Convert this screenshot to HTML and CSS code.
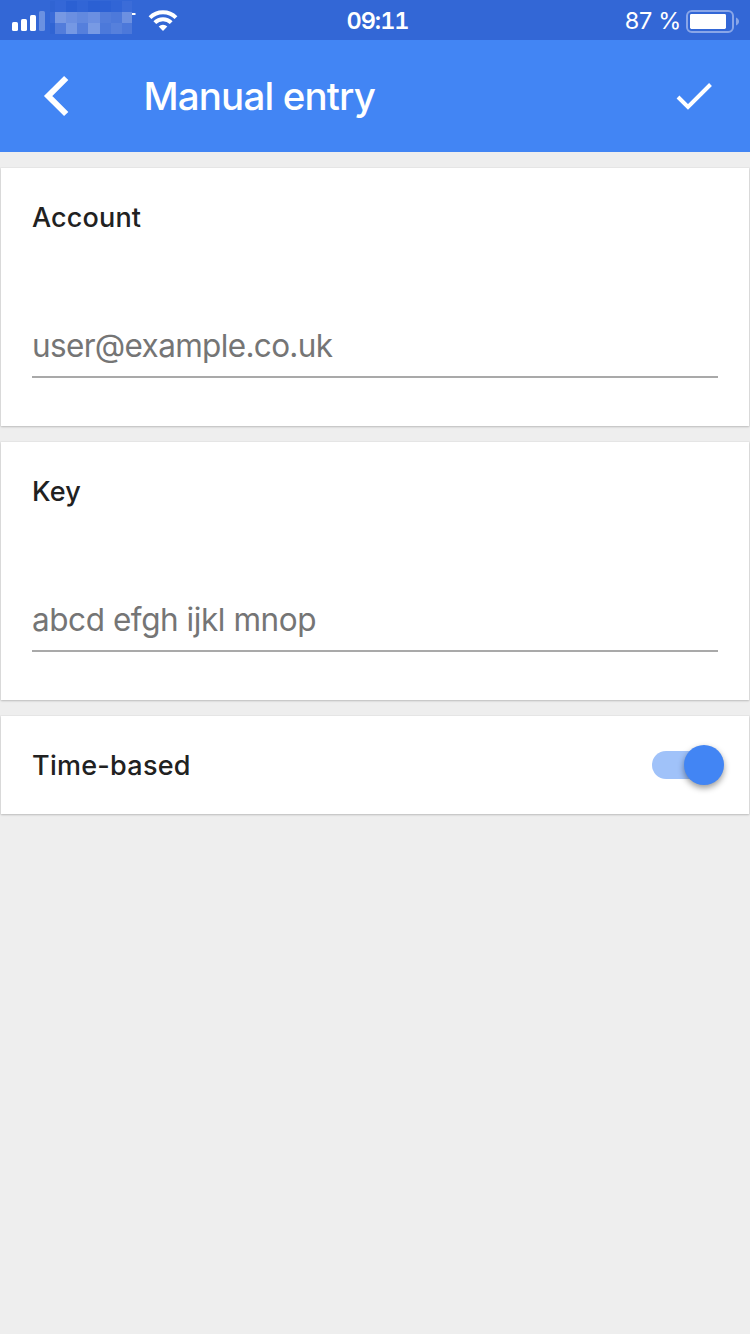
FILE: index.html
```html
<!DOCTYPE html>
<html lang="en">
<head>
<meta charset="utf-8">
<title>Manual entry</title>
<link rel="stylesheet" href="styles.css">
</head>
<body>
<div class="status">
  <svg class="status-left" width="190" height="40" viewBox="0 0 190 40">
    <g fill="#fff">
      <rect x="12" y="21" width="6" height="9" rx="1.6"/>
      <rect x="21" y="18" width="6" height="12" rx="1.6"/>
      <rect x="30" y="14" width="6" height="16" rx="1.6"/>
      <rect x="39" y="10" width="6" height="20" rx="1.6" opacity=".28"/>
    </g>
    <g shape-rendering="crispEdges">
      <path fill="#3064d3" d="M50 0h5v11h-5zM50 22h5v11h-5z"/>
      <path fill="#3a6bd8" d="M50 11h5v11h-5z"/>
      <path fill="#3467d7" d="M55 0h11v11H55z"/>
      <path fill="#2b60d3" d="M66 0h11v11H66zM88 0h12v11H88z"/>
      <path fill="#3165d6" d="M77 0h11v11H77zM111 0h11v11h-11z"/>
      <path fill="#2c61d4" d="M100 0h11v11h-11z"/>
      <path fill="#3b6cd8" d="M122 0h10v11h-10z"/>
      <path fill="#7798e3" d="M55 11h11v11H55z"/>
      <path fill="#6b8fe1" d="M66 11h11v11H66zM88 11h12v11H88z"/>
      <path fill="#6289df" d="M77 11h11v11H77z"/>
      <path fill="#527ddb" d="M100 11h11v11h-11z"/>
      <path fill="#4d79da" d="M111 11h11v11h-11z"/>
      <path fill="#6c90e1" d="M122 11h10v11h-10z"/>
      <path fill="#527cdb" d="M55 22h11v11H55z"/>
      <path fill="#7598e4" d="M66 22h11v11H66z"/>
      <path fill="#557fdc" d="M77 22h11v11H77z"/>
      <path fill="#789ae4" d="M88 22h12v11H88z"/>
      <path fill="#4c79da" d="M100 22h11v11h-11z"/>
      <path fill="#5680dc" d="M111 22h11v11h-11z"/>
      <path fill="#4c78da" d="M122 22h10v11h-10z"/>
    </g>
    <path fill="#fff" d="M132 12h3.500v2H132z"/>
    <g fill="none" stroke="#fff" stroke-width="4">
      <path d="M150 16.600a18.600 18.600 0 0 1 26 0"/>
      <path d="M154.800 21.600a11.800 11.800 0 0 1 16.400 0"/>
    </g>
    <path fill="#fff" d="M158.700 25.600a6.200 6.200 0 0 1 8.600 0L163 30z"/>
  </svg>
  <span class="time">09:11</span>
  <div class="power">
    <span class="percent">87 %</span>
    <svg width="54" height="24" viewBox="0 0 54 24">
      <rect x="2" y="2" width="46" height="21" rx="4.800" fill="none" stroke="#89a6e8" stroke-width="2"/>
      <rect x="5" y="5" width="36" height="15" rx="1.400" fill="#fff"/>
      <path fill="#89a6e8" d="M51 8.500c4 1.500 4 6.500 0 8z"/>
    </svg>
  </div>
</div>
<header class="bar">
  <svg class="back" width="28" height="44" viewBox="0 0 28 44"><path d="M25.200 4L7.200 22l18 18" fill="none" stroke="#fff" stroke-width="6"/></svg>
  <h1 class="title">Manual entry</h1>
  <svg class="check" width="38" height="30" viewBox="0 0 38 30"><path d="M3 16L13 26 35.500 3.500" fill="none" stroke="#fff" stroke-width="4"/></svg>
</header>
<main class="cards">
  <section class="card">
    <h2 class="label account">Account</h2>
    <div class="field email">user@example.co.uk</div>
  </section>
  <section class="card">
    <h2 class="label key">Key</h2>
    <div class="field secret">abcd efgh ijkl mnop</div>
  </section>
  <section class="card row">
    <h2 class="label timed">Time-based</h2>
    <div class="switch"><div class="knob"></div></div>
  </section>
</main>
</body>
</html>
```
FILE: styles.css
```css
* { box-sizing: border-box; }
body {
  margin: 0;
  min-height: 1334px;
  background: #eee;
  font-family: Inter, "Liberation Sans", sans-serif;
  color: #212121;
}
h1, h2 { margin: 0; }
svg { display: block; }
.status {
  display: grid;
  grid-template-columns: 1fr auto 1fr;
  align-items: center;
  height: 40px;
  background: #3367d6;
  color: #fff;
}
.time {
  font-size: 23.5px;
  font-weight: 600;
  font-variant-numeric: tabular-nums;
  letter-spacing: -1px;
  line-height: 40px;
  padding-top: 1px;
  padding-left: 5px;
}
.power {
  display: flex;
  justify-content: flex-end;
  align-items: center;
  gap: 4px;
  padding-right: 11px;
}
.percent {
  font-size: 23.5px;
  letter-spacing: -.3px;
  line-height: 40px;
  padding-top: 1px;
}
.bar {
  display: flex;
  align-items: center;
  height: 112px;
  padding: 0 37px 0 41px;
  background: #4285f4;
  color: #fff;
}
.title {
  flex: 1;
  margin-left: 74.5px;
  font-size: 38.5px;
  font-weight: 460;
  letter-spacing: -.85px;
  line-height: 48px;
}
.cards {
  display: flex;
  flex-direction: column;
  gap: 16px;
  padding: 16px 1px;
}
.card {
  height: 258px;
  padding: 30px 31px 0;
  background: #fff;
  box-shadow: 0 0 0 1px rgba(0, 0, 0, .025), 0 1px 2px rgba(0, 0, 0, .2);
}
.label {
  font-size: 27px;
  font-weight: 500;
  line-height: 40px;
  letter-spacing: .15px;
}
.field {
  height: 66px;
  margin-top: 74px;
  padding-top: 14px;
  border-bottom: 2px solid #a9a9a9;
  color: #757575;
  font-size: 31.5px;
  line-height: 40px;
}
.email { letter-spacing: -.66px; }
.secret { letter-spacing: -.44px; }
.row {
  display: flex;
  align-items: center;
  justify-content: space-between;
  height: 98px;
  padding: 0 25px 0 31px;
}
.timed {
  padding-top: 2px;
  letter-spacing: .27px;
}
.switch {
  display: flex;
  justify-content: flex-end;
  align-items: center;
  width: 72px;
  height: 28px;
  border-radius: 14px;
  background: linear-gradient(90deg, #a0c2f9 52px, transparent 52px);
}
.knob {
  width: 40px;
  height: 40px;
  border-radius: 50%;
  background: #4285f4;
  box-shadow: 0 3px 6px rgba(0, 0, 0, .4);
}
```
